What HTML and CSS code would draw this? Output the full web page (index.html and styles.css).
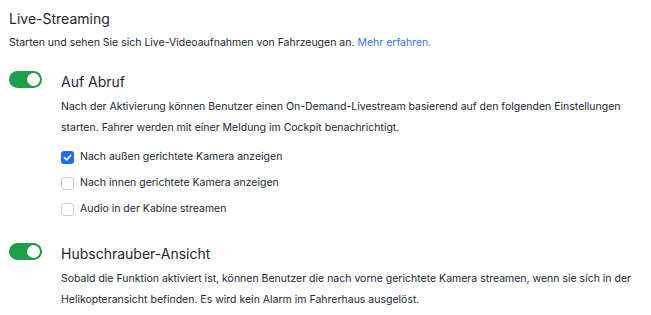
FILE: index.html
```html
<!DOCTYPE html>
<html lang="de">
<head>
  <meta charset="UTF-8">
  <meta name="viewport" content="width=device-width, initial-scale=1.0">
  <title>Live-Streaming</title>
  <link rel="stylesheet" href="styles.css">
</head>
<body>
  <div class="panel">
    <h2 class="title">Live-Streaming</h2>
    <p class="intro">Starten und sehen Sie sich Live-Videoaufnahmen von Fahrzeugen an. <a href="#">Mehr erfahren.</a></p>

    <div class="setting">
      <span class="toggle"><span class="knob"></span></span>
      <div class="body">
        <h3 class="name">Auf Abruf</h3>
        <p class="desc">Nach der Aktivierung können Benutzer einen On-Demand-Livestream basierend auf den folgenden Einstellungen starten. Fahrer werden mit einer Meldung im Cockpit benachrichtigt.</p>
        <ul class="options">
          <li><span class="box checked"><svg viewBox="0 0 13 13" width="13" height="13"><path d="M3.3 6.7 L5.6 8.9 L9.8 4.3" fill="none" stroke="#fff" stroke-width="1.6" stroke-linecap="round" stroke-linejoin="round"/></svg></span>Nach außen gerichtete Kamera anzeigen</li>
          <li><span class="box"></span>Nach innen gerichtete Kamera anzeigen</li>
          <li><span class="box"></span>Audio in der Kabine streamen</li>
        </ul>
      </div>
    </div>

    <div class="setting">
      <span class="toggle"><span class="knob"></span></span>
      <div class="body">
        <h3 class="name">Hubschrauber-Ansicht</h3>
        <p class="desc">Sobald die Funktion aktiviert ist, können Benutzer die nach vorne gerichtete Kamera streamen, wenn sie sich in der Helikopteransicht befinden. Es wird kein Alarm im Fahrerhaus ausgelöst.</p>
      </div>
    </div>
  </div>
</body>
</html>
```

FILE: styles.css
```css
body {
  margin: 0;
  font-family: 'Inter', 'Liberation Sans', sans-serif;
  color: #1d2633;
  background: #fff;
}

.panel {
  padding: 8px 9px;
  width: 637px;
  box-sizing: content-box;
}

.title {
  margin: 0;
  font-size: 14px;
  font-weight: 400;
  line-height: 22px;
}

.intro {
  margin: 5px 0 0;
  font-size: 10.5px;
  line-height: 16px;
}

.intro a {
  color: #3d6ff2;
  text-decoration: none;
}

.setting {
  display: flex;
  margin-top: 20px;
}

.setting + .setting {
  margin-top: 21px;
}

/* toggle switch */
.toggle {
  flex: none;
  width: 33px;
  height: 17px;
  border-radius: 9px;
  background: #1f9f48;
  display: flex;
  align-items: center;
  justify-content: flex-end;
  padding: 0 2px;
  box-sizing: border-box;
}

.knob {
  width: 13px;
  height: 13px;
  border-radius: 50%;
  background: #fff;
  box-shadow: 0 0 0 0.5px rgba(0, 0, 0, 0.15);
}

.body {
  flex: 1;
  margin-left: 19px;
}

.name {
  margin: 0;
  font-size: 14px;
  font-weight: 400;
  line-height: 22px;
}

.desc {
  margin: 3px 0 0;
  font-size: 10.5px;
  line-height: 21px;
}

.options {
  list-style: none;
  margin: 6px 0 0;
  padding: 0;
}

.options li {
  display: flex;
  align-items: center;
  font-size: 10.5px;
  line-height: 16px;
  height: 26px;
}

.box {
  flex: none;
  width: 13px;
  height: 13px;
  margin-right: 6px;
  border: 1px solid #c9cfd9;
  border-radius: 3px;
  box-sizing: border-box;
  background: #fff;
}

.box.checked {
  border: none;
  background: #1f6cf0;
}

.box svg {
  display: block;
}
```
